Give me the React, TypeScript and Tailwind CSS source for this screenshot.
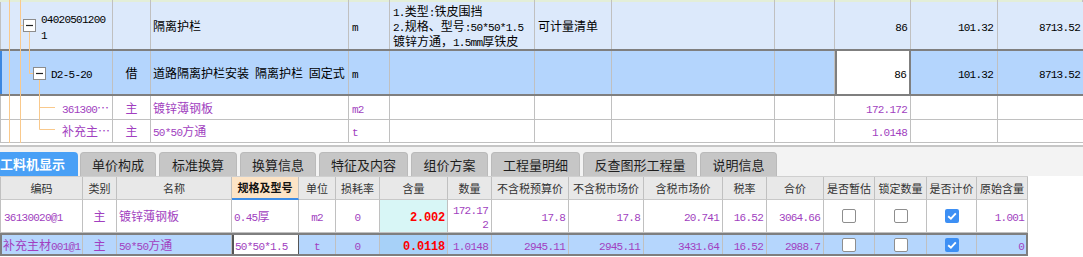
import React from "react";

function T({ s }: { s: string }) {
  const parts = s.match(/[\x20-\x7e]+|[^\x20-\x7e]+/g) || [];
  return (
    <span className="whitespace-pre">
      {parts.map((p, i) =>
        /^[\x20-\x7e]+$/.test(p) ? (
          <span key={i} className="font-['Liberation_Mono',monospace] text-[11px] leading-[10px] tracking-[-0.75px]">
            {p}
          </span>
        ) : (
          <span key={i} className="text-[12px] leading-[10px]">
            {p}
          </span>
        )
      )}
    </span>
  );
}

function C({
  children,
  className = "",
  nb = false,
}: {
  children?: React.ReactNode;
  className?: string;
  nb?: boolean;
}) {
  return (
    <div
      className={
        "flex items-center overflow-hidden whitespace-nowrap " +
        (nb ? "" : "border-r border-[#c0c0c0] ") +
        className
      }
    >
      {children}
    </div>
  );
}

function Red({ s }: { s: string }) {
  return (
    <span className="whitespace-pre">
      <span className="font-['Liberation_Mono',monospace] text-[12px] leading-[10px] font-bold tracking-[-0.2px] text-[#ff0000]">
        {s}
      </span>
    </span>
  );
}

function Box({ on = false }: { on?: boolean }) {
  return on ? (
    <div className="w-[14px] h-[14px] rounded-[2px] bg-[#3d8ff4] flex items-center justify-center">
      <svg width="10" height="8" viewBox="0 0 10 8">
        <path d="M1.2 4.2 L3.9 6.6 L8.8 1.4" stroke="white" strokeWidth="1.9" fill="none" />
      </svg>
    </div>
  ) : (
    <div className="w-[14px] h-[14px] rounded-[2px] border border-[#8e8e8e] bg-white" />
  );
}

const TOP = "grid grid-cols-[113px_38px_198px_41px_145px_77px_163px_60px_76px_87px_85px]";
const BOT =
  "grid grid-cols-[83px_34px_115px_67px_37px_44px_68px_44px_77px_75px_79px_44px_57px_51px_52px_50px_51px]";

const tabs: { t: string; w: string }[] = [
  { t: "单价构成", w: "w-[76px]" },
  { t: "标准换算", w: "w-[78px]" },
  { t: "换算信息", w: "w-[76px]" },
  { t: "特征及内容", w: "w-[89px]" },
  { t: "组价方案", w: "w-[77px]" },
  { t: "工程量明细", w: "w-[89px]" },
  { t: "反查图形工程量", w: "w-[114px]" },
  { t: "说明信息", w: "w-[77px]" },
];

const heads = [
  "编码",
  "类别",
  "名称",
  "规格及型号",
  "单位",
  "损耗率",
  "含量",
  "数量",
  "不含税预算价",
  "不含税市场价",
  "含税市场价",
  "税率",
  "合价",
  "是否暂估",
  "锁定数量",
  "是否计价",
  "原始含量",
];

export default function App() {
  return (
    <div className="w-[1083px] h-[257px] overflow-hidden bg-white font-['Noto_Sans_CJK_SC',sans-serif] text-[12px] text-black">
      {/* upper grid */}
      <div className="relative">
        <div className={TOP + " h-[2px] bg-[#e3eed8]"}>
          {Array.from({ length: 11 }).map((_, i) => (
            <C key={i} />
          ))}
        </div>
        {/* row 1 */}
        <div className={TOP + " h-[47px] bg-[#dce9fb]"}>
          <C className="pl-[40px] border-l border-l-[#c0c0c0]">
            <div className="leading-[16px]">
              <T s="04020501200" />
              <br />
              <T s="1" />
            </div>
          </C>
          <C />
          <C className="pl-[2px]">
            <T s="隔离护栏" />
          </C>
          <C className="pl-[3px]">
            <T s="m" />
          </C>
          <C className="pl-[3px]">
            <div className="leading-[15px]">
              <T s="1.类型:铁皮围挡" />
              <br />
              <T s="2.规格、型号:50*50*1.5" />
              <br />
              <T s="镀锌方通，1.5mm厚铁皮" />
            </div>
          </C>
          <C className="pl-[3px]">
            <T s="可计量清单" />
          </C>
          <C />
          <C />
          <C className="justify-end pr-[3px]">
            <T s="86" />
          </C>
          <C className="justify-end pr-[4px]">
            <T s="101.32" />
          </C>
          <C className="justify-end pr-[3px]" nb>
            <T s="8713.52" />
          </C>
        </div>
        {/* row 2 selected */}
        <div className={TOP + " h-[47px] bg-[#b4d5fd] border-y-2 border-[#7f7f7f]"}>
          <C className="pl-[49px] border-l-2 border-l-[#3b86e0]">
            <T s="D2-5-20" />
          </C>
          <C className="justify-center">
            <T s="借" />
          </C>
          <C className="pl-[2px]">
            <T s="道路隔离护栏安装 隔离护栏 固定式" />
          </C>
          <C className="pl-[3px]">
            <T s="m" />
          </C>
          <C />
          <C />
          <C />
          <C />
          <C nb className="justify-end pr-[3px] bg-white border-x-2 border-[#7f7f7f]">
            <T s="86" />
          </C>
          <C className="justify-end pr-[4px]">
            <T s="101.32" />
          </C>
          <C className="justify-end pr-[3px]" nb>
            <T s="8713.52" />
          </C>
        </div>
        {/* row 3 */}
        <div className={TOP + " h-[24px] border-b border-[#c0c0c0] text-[#a13fc0]"}>
          <C className="pl-[61px] border-l border-l-[#c0c0c0]">
            <T s="361300…" />
          </C>
          <C className="justify-center">
            <T s="主" />
          </C>
          <C className="pl-[2px]">
            <T s="镀锌薄钢板" />
          </C>
          <C className="pl-[3px]">
            <T s="m2" />
          </C>
          <C />
          <C />
          <C />
          <C />
          <C className="justify-end pr-[3px]">
            <T s="172.172" />
          </C>
          <C />
          <C nb />
        </div>
        {/* row 4 */}
        <div className={TOP + " h-[23px] border-b border-[#c0c0c0] text-[#a13fc0]"}>
          <C className="pl-[61px] border-l border-l-[#c0c0c0]">
            <T s="补充主…" />
          </C>
          <C className="justify-center">
            <T s="主" />
          </C>
          <C className="pl-[2px]">
            <T s="50*50方通" />
          </C>
          <C className="pl-[3px]">
            <T s="t" />
          </C>
          <C />
          <C />
          <C />
          <C />
          <C className="justify-end pr-[3px]">
            <T s="1.0148" />
          </C>
          <C />
          <C nb />
        </div>
        {/* tree lines */}
        <svg className="absolute left-0 top-0 pointer-events-none" width="113" height="143">
          <g stroke="#f9c98c" strokeWidth="1" fill="none">
            <path d="M9.5 0 V143 M20.5 0 V143" />
            <path d="M20.5 25.5 H23" />
            <path d="M29.5 32 V73.5 H33" />
            <path d="M39.5 80 V129.5 M39.5 107.5 H55 M39.5 129.5 H55" />
          </g>
          <rect x="23.5" y="19.5" width="12" height="12" fill="white" stroke="#8c8c8c" />
          <path d="M26 25.5 H33" stroke="#222" strokeWidth="1.2" />
          <rect x="33.5" y="67.5" width="12" height="12" fill="white" stroke="#8c8c8c" />
          <path d="M36 73.5 H43" stroke="#222" strokeWidth="1.2" />
        </svg>
      </div>
      <div className="h-[2px] bg-white" />
      <div className="h-[2px] bg-[#c6c6c6]" />
      {/* tabs */}
      <div className="h-[29px] bg-[#f3f3f3] pt-[5px] flex items-end">
        <div className="w-[78px] h-[24px] rounded-tr-[4px] bg-[#49a0f6] text-white font-bold text-[13px] flex items-center pl-0">
          工料机显示
        </div>
        <div className="flex gap-[3px] ml-[2px]">
          {tabs.map((t) => (
            <div
              key={t.t}
              className={
                t.w +
                " h-[24px] rounded-t-[4px] bg-[#c6c6c6] border border-b-0 border-[#bababa] text-[13px] text-[#1e1e1e] flex items-center justify-center"
              }
            >
              {t.t}
            </div>
          ))}
        </div>
      </div>
      {/* lower table */}
      <div className="flex">
        <div className="w-[1028px]">
          <div className={BOT + " h-[24px] bg-[#e8e8e8] border-t border-[#cfcfcf]"}>
            {heads.map((h, i) =>
              h === "规格及型号" ? (
                <C
                  key={h}
                  className="justify-center bg-[#fde4c6] border-b-2 border-b-[#3d8de6] text-[11px] font-bold text-[#111]"
                >
                  {h}
                </C>
              ) : (
                <C
                  key={h}
                  className={
                    "justify-center text-[11px] text-[#333] border-b border-b-[#c8c8c8] " +
                    (i === 0 ? "border-l border-l-[#c0c0c0]" : "")
                  }
                >
                  {h}
                </C>
              )
            )}
          </div>
          {/* row 1 */}
          <div className={BOT + " h-[33px] border-b border-[#c0c0c0] text-[#a13fc0]"}>
            <C className="pl-[3px] border-l border-l-[#c0c0c0]">
              <T s="36130020@1" />
            </C>
            <C className="justify-center">
              <T s="主" />
            </C>
            <C className="pl-[2px]">
              <T s="镀锌薄钢板" />
            </C>
            <C className="pl-[2px]">
              <T s="0.45厚" />
            </C>
            <C className="justify-center">
              <T s="m2" />
            </C>
            <C className="justify-center">
              <T s="0" />
            </C>
            <C className="justify-end pr-[2px] bg-[#d8f6f6]">
              <Red s="2.002" />
            </C>
            <C className="justify-end pr-[3px]">
              <div className="leading-[14px] text-right">
                <T s="172.17" />
                <br />
                <T s="2" />
              </div>
            </C>
            <C className="justify-end pr-[3px]">
              <T s="17.8" />
            </C>
            <C className="justify-end pr-[3px]">
              <T s="17.8" />
            </C>
            <C className="justify-end pr-[3px]">
              <T s="20.741" />
            </C>
            <C className="justify-end pr-[3px]">
              <T s="16.52" />
            </C>
            <C className="justify-end pr-[3px]">
              <T s="3064.66" />
            </C>
            <C className="justify-center">
              <Box />
            </C>
            <C className="justify-center">
              <Box />
            </C>
            <C className="justify-center">
              <Box on />
            </C>
            <C className="justify-end pr-[3px]">
              <T s="1.001" />
            </C>
          </div>
          {/* row 2 */}
          <div className={BOT + " h-[23px] border-y-2 border-[#7f7f7f] bg-[#b5d6fd] text-[#a13fc0]"}>
            <C className="pl-[1px] border-l-2 border-l-[#7f7f7f]">
              <T s="补充主材001@1" />
            </C>
            <C className="justify-center">
              <T s="主" />
            </C>
            <C className="pl-[2px]">
              <T s="50*50方通" />
            </C>
            <C nb className="pl-[1px] bg-white border-l-2 border-r border-[#555]">
              <T s="50*50*1.5" />
            </C>
            <C className="justify-center">
              <T s="t" />
            </C>
            <C className="justify-center">
              <T s="0" />
            </C>
            <C className="justify-end pr-[2px] bg-[#a7d1f8]">
              <Red s="0.0118" />
            </C>
            <C className="justify-end pr-[3px]">
              <T s="1.0148" />
            </C>
            <C className="justify-end pr-[3px]">
              <T s="2945.11" />
            </C>
            <C className="justify-end pr-[3px]">
              <T s="2945.11" />
            </C>
            <C className="justify-end pr-[3px]">
              <T s="3431.64" />
            </C>
            <C className="justify-end pr-[3px]">
              <T s="16.52" />
            </C>
            <C className="justify-end pr-[3px]">
              <T s="2988.7" />
            </C>
            <C className="justify-center">
              <Box />
            </C>
            <C className="justify-center">
              <Box />
            </C>
            <C className="justify-center">
              <Box on />
            </C>
            <C nb className="justify-end pr-[2px] border-r-2 border-[#7f7f7f]">
              <T s="0" />
            </C>
          </div>
        </div>
        <div className="flex-1 bg-white" />
      </div>
    </div>
  );
}
